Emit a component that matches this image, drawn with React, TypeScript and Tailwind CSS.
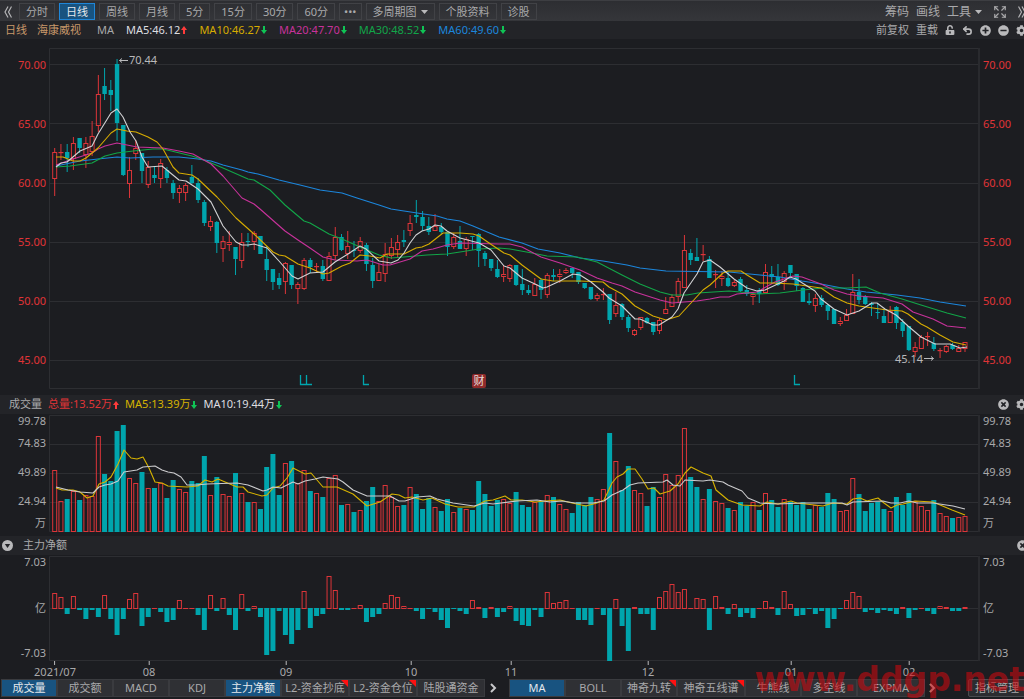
import { useState } from "react";
import { Expand, Undo2 } from "lucide-react";
import { FaCog, FaMinusCircle, FaPlusCircle, FaTimesCircle, FaUnlockAlt } from "react-icons/fa";

const RED = "#dc3539";
const CYAN = "#00a5ad";
const GRID = "#2d2e32";

const FIRST_X = 54.7;
const STEP = 6.235;
const PLOT_LEFT = 49;
const PLOT_WIDTH = 931;

const dayX = (i: number) => FIRST_X + i * STEP;
const percent = (x: number) => `${((x - PLOT_LEFT) / PLOT_WIDTH) * 100}%`;

// high, body top, body bottom, low in plot units
const candles = [
    [148, 152, 179, 196], [144, 152, 153, 160], [144, 152, 158, 172], [137, 143, 159, 170], [138, 138, 148, 153],
    [137, 143, 155, 168], [121, 136, 152, 156], [75, 94, 126, 132], [68, 86, 94, 100], [80, 90, 95, 111],
    [59, 64, 123, 141], [125, 125, 175, 176], [157, 170, 184, 198], [140, 148, 154, 160], [153, 153, 171, 183],
    [161, 167, 185, 188], [167, 175, 178, 183], [159, 163, 179, 188], [167, 170, 178, 183], [180, 183, 193, 199],
    [185, 188, 193, 203], [183, 185, 193, 201], [165, 177, 183, 184], [178, 183, 200, 203], [200, 202, 223, 226],
    [216, 221, 227, 231], [221, 222, 243, 253], [236, 241, 249, 262], [231, 242, 245, 251], [247, 247, 259, 275],
    [233, 242, 261, 268], [233, 241, 242, 247], [231, 233, 242, 250], [236, 236, 254, 254], [246, 259, 270, 281],
    [269, 269, 282, 290], [273, 278, 285, 289], [262, 263, 282, 294], [265, 265, 285, 289], [282, 284, 289, 304],
    [258, 260, 289, 290], [258, 260, 267, 273], [263, 266, 267, 272], [260, 266, 279, 281], [252, 256, 281, 281],
    [227, 237, 256, 260], [234, 237, 250, 251], [231, 246, 254, 259], [241, 250, 251, 257], [237, 241, 251, 253],
    [243, 245, 264, 271], [258, 265, 281, 288], [264, 272, 281, 281], [243, 254, 274, 282], [238, 247, 256, 259],
    [235, 242, 250, 258], [230, 240, 242, 247], [215, 223, 231, 236], [200, 215, 217, 223], [211, 217, 226, 231],
    [217, 226, 232, 235], [214, 226, 231, 231], [223, 227, 232, 234], [232, 232, 247, 256], [233, 237, 247, 249],
    [226, 241, 249, 249], [237, 239, 249, 256], [236, 236, 237, 250], [233, 234, 251, 267], [251, 253, 259, 266],
    [259, 259, 268, 271], [260, 269, 277, 278], [265, 274, 277, 282], [264, 265, 279, 282], [265, 265, 285, 286],
    [269, 284, 290, 295], [285, 290, 293, 295], [278, 284, 296, 296], [278, 280, 290, 299], [273, 275, 295, 298],
    [269, 275, 277, 281], [269, 274, 277, 283], [268, 270, 273, 274], [268, 268, 273, 278], [272, 272, 282, 284],
    [283, 283, 288, 289], [287, 287, 299, 300], [293, 295, 299, 301], [288, 294, 295, 300], [294, 294, 320, 324],
    [292, 305, 314, 317], [303, 304, 317, 320], [315, 317, 328, 332], [329, 330, 335, 336], [317, 317, 328, 330],
    [317, 318, 323, 324], [322, 322, 332, 335], [318, 320, 331, 334], [297, 309, 314, 314], [294, 297, 307, 307],
    [278, 281, 297, 303], [235, 250, 288, 288], [249, 253, 260, 265], [238, 257, 261, 261], [245, 254, 255, 261],
    [256, 259, 278, 278], [270, 274, 275, 288], [271, 276, 279, 286], [272, 278, 286, 287], [280, 282, 286, 287],
    [277, 279, 291, 292], [285, 290, 294, 296], [292, 294, 297, 305], [288, 290, 294, 303], [264, 272, 293, 293],
    [266, 274, 277, 284], [264, 277, 285, 286], [271, 273, 282, 290], [265, 265, 273, 278], [274, 274, 286, 291],
    [287, 288, 302, 302], [293, 301, 303, 305], [294, 298, 306, 312], [295, 298, 305, 307], [304, 305, 311, 320],
    [309, 309, 324, 324], [317, 321, 324, 326], [309, 315, 321, 321], [274, 292, 314, 314], [279, 292, 300, 304],
    [295, 296, 304, 305], [302, 303, 305, 316], [303, 312, 313, 319], [309, 316, 323, 323], [306, 311, 323, 323],
    [306, 307, 323, 329], [319, 322, 331, 337], [326, 326, 350, 351], [342, 347, 352, 357], [335, 337, 349, 349],
    [332, 336, 337, 346], [337, 343, 349, 351], [348, 350, 351, 358], [345, 346, 352, 353], [343, 345, 349, 350],
    [345, 348, 352, 352], [342, 342, 349, 352],
];

// negative = the day closed lower
const volumes = [
    62, 31, -33, 41, -32, 37, 36, 96, -58, -51, -101, -107, 54, 49, -60, 44, -44, 49, -34, -52,
    43, 40, -51, -49, -76, 37, -55, 38, 36, -59, 39, -30, 30, -23, -65, -78, -37, 69, -71, 49,
    62, -41, 39, -35, 54, 57, -27, 28, -20, 22, -31, -45, 31, 47, 35, 26, -27, 45, -38, -23,
    -34, 25, -21, -33, 20, -24, 23, -22, -51, -38, -26, -32, 33, 29, -40, -27, -25, 30, -31, 37,
    -35, 28, 23, -19, -30, -27, -35, 33, 43, -99, 71, -42, -66, 42, 39, -26, -45, 35, 58, 47,
    57, 104, -55, -45, 33, -43, 31, 29, -24, 22, -30, -26, 30, -22, 39, -32, -25, 33, -30, -27,
    -30, -23, 27, -25, -39, -33, 21, 22, 54, -38, -21, -29, -30, -23, 21, -35, -27, -39, 31, 26,
    22, -32, 19, 16, -14, 15, 16,
];

const flows = [
    16, 12, -6, 13, -2, -11, -2, -9, 14, -11, -27, -11, 10, 16, -18, -9, 1, -4, -14, -12,
    9, 1, 1, -7, -22, 14, -3, 11, -7, -22, 15, -3, 3, -9, -47, -43, -3, -27, -36, -22,
    18, -20, -8, -6, 33, 19, -2, -2, 1, 4, -14, -9, -6, 6, 14, 12, 3, 1, -3, -11,
    -1, -4, -12, -20, -1, -3, -6, 9, 2, -10, 2, -9, -4, 3, -13, -17, -18, -2, -9, 17,
    6, 7, 9, 1, -12, -12, -17, 1, -7, -53, 10, -18, -43, 2, -6, -6, -22, 12, 18, 25,
    17, 20, 1, 11, 10, -22, 13, 2, -6, 5, -9, -5, -10, 1, 8, 2, -7, 18, 5, -8,
    -7, -1, -6, -3, -20, -11, -1, 9, 17, 13, -4, -2, -5, -2, -3, -6, 2, -10, -2, 1,
    -3, -6, 3, 2, -3, -3, 2,
];

const priceLines = [
    { color: "#1c86dc", points: "56,166 80,161 98,159 117,157 130,158 153,157 179,157 198,159 211,161 223,165 242,170 248,172 258,174 279,180 300,185 320,190 342,193 357,198 379,205 391,209 404,211 437,216 447,219 460,221 473,226 499,237 522,243 538,249 560,253 580,258 603,261 627,265 640,268 666,271 729,272 760,275 780,277 802,281 821,284 847,289 866,292 897,295 920,298 940,302 966,306" },
    { color: "#12a548", points: "56,167 70,166 92,163 105,156 117,153 133,151 153,149 163,149 192,156 204,160 223,168 248,179 254,180 270,190 285,205 304,221 310,223 329,234 342,239 360,247 379,255 391,258 404,257 427,255 447,254 460,252 479,249 499,248 510,249 532,253 547,256 577,257 597,262 622,275 640,284 660,292 672,295 687,295 698,293 729,291 740,292 757,294 780,293 803,290 823,288 847,288 866,287 880,293 902,299 921,305 947,313 966,318" },
    { color: "#c8329b", points: "56,165 73,159 92,153 98,149 105,146 117,143 127,145 137,147 163,148 179,151 193,154 211,164 223,176 242,198 254,204 260,209 285,231 298,240 310,248 323,257 335,260 357,261 367,260 383,265 390,265 410,259 422,251 433,249 447,245 460,243 499,244 510,244 522,247 541,257 560,263 580,270 597,278 612,283 622,286 635,292 660,300 672,303 684,302 697,301 710,299 720,297 729,297 737,294 757,292 775,282 793,276 802,277 821,284 834,290 847,294 859,296 883,298 902,304 913,312 933,319 947,326 966,328" },
    { color: "#d7ac00", points: "56,157 63,157 73,161 80,161 86,158 98,148 111,133 117,129 127,131 136,132 148,137 157,142 163,149 173,167 179,173 192,175 198,179 217,197 236,218 254,234 273,252 279,255 285,256 298,264 310,268 323,274 329,273 342,266 350,263 360,255 370,256 380,258 387,254 404,254 416,248 422,247 429,244 443,233 460,233 473,234 479,236 492,245 504,253 510,255 522,265 541,279 553,281 580,281 603,282 609,287 622,294 635,306 653,316 666,320 679,316 703,290 710,285 723,273 728,271 741,271 747,275 760,283 772,283 793,284 821,288 834,297 847,303 859,306 887,310 902,311 908,314 921,324 927,327 940,335 953,342 966,345" },
    { color: "#d2d2d4", points: "56,167 61,163 67,162 80,151 92,146 98,134 111,113 117,109 123,117 130,132 136,141 142,157 148,167 162,166 179,180 186,181 198,189 211,202 223,226 236,242 242,245 248,245 254,244 267,248 279,261 292,276 298,279 310,273 323,272 335,262 348,254 360,246 366,249 379,261 391,263 398,260 404,253 410,243 416,235 422,231 429,229 435,225 441,226 447,231 460,238 479,243 491,250 504,266 510,268 522,278 535,284 543,288 547,287 560,281 573,274 580,275 591,282 603,292 609,298 622,306 635,319 640,319 653,325 659,325 672,317 678,309 684,293 697,274 703,262 710,260 720,267 734,279 747,288 757,291 765,290 784,281 790,277 796,279 815,291 821,299 834,309 847,315 859,311 872,303 877,303 885,309 896,315 908,326 921,337 935,344 950,344 960,348 967,347" },
];

const volumeLines = [
    { color: "#d7b300", points: "56,488 62,490 73,490 80,492 87,498 93,496 99,484 105,482 111,477 118,464 124,450 131,458 137,459 143,457 149,468 155,482 162,483 168,486 187,487 198,486 205,480 212,482 218,479 237,487 243,487 248,492 262,496 267,495 273,488 280,486 287,478 293,468 305,474 311,473 323,487 337,487 353,494 367,506 380,502 392,494 399,495 405,498 412,497 423,500 432,498 445,504 458,507 474,507 485,501 493,500 505,496 511,500 522,500 535,502 545,501 560,500 572,503 586,506 597,503 604,500 612,483 617,477 623,474 628,469 635,469 642,479 648,489 654,488 660,494 670,491 678,484 685,473 691,467 703,473 711,476 716,490 728,500 742,505 760,506 767,502 778,504 791,501 797,503 823,506 833,503 847,504 853,499 860,498 867,501 878,498 884,503 891,508 897,505 903,504 915,501 933,502 952,510 965,515" },
    { color: "#cbcbcd", points: "56,487 68,490 80,492 93,493 99,487 105,485 111,484 118,481 124,472 137,470 143,467 155,466 162,470 168,472 174,473 181,477 187,485 197,485 207,484 237,483 248,485 263,491 267,490 273,487 281,488 293,482 298,484 305,481 315,479 323,477 338,479 343,482 353,490 367,496 390,496 399,501 405,501 417,497 430,496 437,499 453,503 474,506 485,503 493,504 517,501 537,500 550,502 562,501 575,503 593,503 604,501 612,495 623,490 630,485 638,483 663,482 667,480 673,485 680,486 685,480 703,481 710,480 723,482 728,485 742,491 748,498 760,503 778,504 803,503 842,503 847,505 853,502 883,501 891,503 900,503 909,501 917,503 933,503 953,506 965,509" },
];

const months = [
    { label: "2021/07", x: 55 },
    { label: "08", x: 149 },
    { label: "09", x: 286 },
    { label: "10", x: 411 },
    { label: "11", x: 511 },
    { label: "12", x: 648 },
    { label: "01", x: 791 },
    { label: "02", x: 909 },
];

const signals = [303, 309, 366, 797];

const periods = ["分时", "日线", "周线", "月线", "5分", "15分", "30分", "60分", "•••", "多周期图", "个股资料", "诊股"];

const leftTabs = [
    { label: "成交量" },
    { label: "成交额" },
    { label: "MACD" },
    { label: "KDJ" },
    { label: "主力净额" },
    { label: "L2-资金抄底", wide: true, hot: true },
    { label: "L2-资金仓位", wide: true, hot: true },
    { label: "陆股通资金", wide: true },
];

const rightTabs = [
    { label: "MA" },
    { label: "BOLL" },
    { label: "神奇九转", hot: true },
    { label: "神奇五线谱", wide: true, hot: true },
    { label: "牛熊线" },
    { label: "多空线" },
    { label: "EXPMA", wide: true },
];

const Arrow = ({ up }: { up?: boolean }) => (
    <svg width="6" height="8" viewBox="0 0 6 8" className="shrink-0">
        {up ? <path d="M3 0 6 4H4V8H2V4H0Z" fill="#ff3b3b" /> : <path d="M3 8 6 4H4V0H2V4H0Z" fill="#0fc455" />}
    </svg>
);

const Caret = () => (
    <svg width="7" height="4" viewBox="0 0 7 4" className="shrink-0">
        <path d="M0 0H7L3.5 4Z" fill="#b9b9bb" />
    </svg>
);

const Chevrons = ({ right }: { right?: boolean }) => (
    <svg width="8" height="12" viewBox="0 0 8 12" fill="none" stroke="#b5b5b7" strokeWidth="1.2">
        {right ? <path d="M.5 .5 3.5 6 .5 11.5M4 .5 7 6 4 11.5" /> : <path d="M4 .5 1 6 4 11.5M7.5 .5 4.5 6 7.5 11.5" />}
    </svg>
);

const More = () => (
    <svg width="7" height="10" viewBox="0 0 7 10" fill="none" stroke="#c9c9cb" strokeWidth="2">
        <path d="M1 1 5 5 1 9" />
    </svg>
);

const Reading = ({ text, up, className }: { text: string; up?: boolean; className: string }) => (
    <span className={`flex items-center gap-px ${className}`}>
        {text}
        <Arrow up={up} />
    </span>
);

const Plot = ({ top, height, grid, label, children }: { top: number; height: number; grid: number[]; label: string; children: React.ReactNode }) => (
    <svg
        role="img"
        aria-label={label}
        className="block w-full"
        height={height}
        viewBox={`${PLOT_LEFT} ${top} ${PLOT_WIDTH} ${height}`}
        preserveAspectRatio="none"
    >
        {grid.map((y) => (
            <line key={y} x1="49" x2="978" y1={y + 0.5} y2={y + 0.5} stroke={GRID} />
        ))}
        <path d={`M978 ${top + 0.5}H49.5V${top + height - 0.5}H978`} fill="none" stroke={GRID} />
        <line x1="979" x2="979" y1={top} y2={top + height} stroke="#292a2e" strokeWidth="2" />
        {children}
    </svg>
);

const Bar = ({ x, y, height, up }: { x: number; y: number; height: number; up: boolean }) =>
    up && height > 2 ? (
        <rect x={x - 2} y={y + 0.5} width="4" height={height - 1} fill="none" stroke={RED} />
    ) : (
        <rect x={x - 2.5} y={y} width="5" height={Math.max(height, 1)} fill={up ? RED : CYAN} />
    );

const Lines = ({ lines }: { lines: { color: string; points: string }[] }) => (
    <>
        {lines.map((l) => (
            <polyline key={l.color} points={l.points} fill="none" stroke={l.color} strokeWidth="1.1" strokeLinejoin="round" />
        ))}
    </>
);

const IndicatorTabs = ({ tabs, initial }: { tabs: { label: string; wide?: boolean; hot?: boolean }[]; initial: string[] }) => {
    const [active, setActive] = useState<string[]>(initial);

    const toggle = (label: string) => {
        setActive((prev) => (prev.includes(label) ? prev.filter((a) => a !== label) : [...prev, label]));
    };

    return (
        <div className="flex">
            {tabs.map((tab) => (
                <button
                    key={tab.label}
                    onClick={() => toggle(tab.label)}
                    className={`relative h-[18px] shrink-0 overflow-hidden whitespace-nowrap border border-[#3a3b3f] text-center leading-4 ${tab.wide ? "w-[68px]" : "w-14"} ${active.includes(tab.label) ? "bg-[#185380] text-[#e4e8ec]" : "bg-[#2f3034] text-[#a9a9ab]"}`}
                >
                    {tab.label}
                    {tab.hot && (
                        <svg width="7" height="7" viewBox="0 0 7 7" className="absolute right-0 top-0">
                            <path d="M0 0H7V7Z" fill="#ff1010" />
                        </svg>
                    )}
                </button>
            ))}
        </div>
    );
};

const prices = ["70.00", "65.00", "60.00", "55.00", "50.00", "45.00"];

const PriceAxis = ({ className }: { className: string }) => (
    <div className={`shrink-0 pt-[9px] leading-4 text-[#e03437] ${className}`}>
        {prices.map((p) => (
            <div key={p} className="h-[59px] last:h-4">{p}</div>
        ))}
    </div>
);

const VolumeAxis = ({ className }: { className: string }) => (
    <div className={`shrink-0 leading-3 ${className}`}>
        <div className="h-[22px]">99.78</div>
        <div className="h-[29px]">74.83</div>
        <div className="h-[29px]">49.89</div>
        <div className="h-[22px]">24.94</div>
        <div>万</div>
    </div>
);

const FlowAxis = ({ className }: { className: string }) => (
    <div className={`flex shrink-0 flex-col justify-between pb-[2px] leading-3 ${className}`}>
        <span>7.03</span>
        <span>亿</span>
        <span>-7.03</span>
    </div>
);

const App = () => {
    const [period, setPeriod] = useState("日线");

    return (
        <div className="relative overflow-hidden bg-[#1c1d21] font-['Noto_Sans','Noto_Sans_CJK_SC',sans-serif] text-[11px] text-[#a9a9ab]">
            <header className="flex h-[21px] items-center justify-between border-t border-[#3d3e42] bg-linear-to-b from-[#2d2e32] to-[#35363a] pt-px">
                <nav className="flex items-center gap-1">
                    <button aria-label="收起" className="mr-[3px] pl-1"><Chevrons /></button>
                    {periods.map((p) => (
                        <button
                            key={p}
                            onClick={() => setPeriod(p)}
                            className={`flex h-[17px] items-center gap-1 whitespace-nowrap border leading-4 ${p === "•••" ? "px-1" : "px-[6px]"} ${p === period ? "border-[#1f86d8] bg-[#185380] text-[#e4e8ec]" : "border-[#414246]"}`}
                        >
                            {p}
                            {p === "多周期图" && <Caret />}
                        </button>
                    ))}
                </nav>
                <div className="-mr-[2px] flex items-center gap-[7px] text-xs leading-4">
                    <button>筹码</button>
                    <button>画线</button>
                    <button className="flex items-center gap-1">工具<Caret /></button>
                    <button aria-label="全屏" className="ml-1"><Expand size={14} strokeWidth={2} /></button>
                    <button aria-label="展开" className="ml-1"><Chevrons right /></button>
                </div>
            </header>

            <div className="flex h-[18px] items-center justify-between bg-[#232428] pl-[5px]">
                <div className="flex items-center gap-4 whitespace-nowrap">
                    <div className="flex gap-[10px] text-[#c8986a]">
                        <span>日线</span>
                        <span>海康威视</span>
                    </div>
                    <div className="flex items-center gap-3">
                        <span>MA</span>
                        <Reading text="MA5:46.12" up className="text-[#dedee0]" />
                        <Reading text="MA10:46.27" className="text-[#d7ac00]" />
                        <Reading text="MA20:47.70" className="text-[#c8329b]" />
                        <Reading text="MA30:48.52" className="text-[#12a548]" />
                        <Reading text="MA60:49.60" className="text-[#1c86dc]" />
                    </div>
                </div>
                <div className="-mr-[3px] flex items-center gap-[7px]">
                    <button>前复权</button>
                    <button>重载</button>
                    <button aria-label="锁定"><FaUnlockAlt size={10} color="#b9b9bb" /></button>
                    <button aria-label="撤销"><Undo2 size={11} strokeWidth={3.5} color="#b9b9bb" /></button>
                    <button aria-label="放大"><FaPlusCircle size={11} color="#b9b9bb" /></button>
                    <button aria-label="缩小"><FaMinusCircle size={11} color="#b9b9bb" /></button>
                    <button aria-label="设置"><FaCog size={11} color="#b9b9bb" /></button>
                </div>
            </div>

            <section className="flex pb-[6px] pt-[9px]">
                <PriceAxis className="w-[49px] pr-[3px] text-right" />
                <div className="relative min-w-0 flex-1">
                    <Plot top={48} height={341} grid={[64, 123, 183, 242, 301, 360]} label="日K线">
                        {candles.map(([high, top, bottom, low], i) => {
                            const x = dayX(i);
                            const up = volumes[i] > 0;
                            return up ? (
                                <g key={i} stroke={RED} fill="none">
                                    <path d={`M${x} ${high}V${top}M${x} ${bottom}V${low}`} />
                                    <rect x={x - 2} y={top + 0.5} width="4" height={Math.max(bottom - top - 1, 0.2)} />
                                </g>
                            ) : (
                                <g key={i} fill={CYAN}>
                                    <rect x={x - 0.5} y={high} width="1" height={low - high} />
                                    <rect x={x - 2.2} y={top} width="4.4" height={bottom - top} />
                                </g>
                            );
                        })}
                        <Lines lines={priceLines} />
                        <path d="M128 60.5H119.5M122 58.5 119.5 60.5 122 62.5M924 358.5H933.5M931 356.5 933.5 358.5 931 360.5" stroke="#b9b9bb" fill="none" />
                        {signals.map((x) => (
                            <path key={x} d={`M${x - 2.5} 375V384.5H${x + 3}`} stroke={CYAN} strokeWidth="1.3" fill="none" />
                        ))}
                    </Plot>
                    <span className="absolute top-1 leading-4 text-[#b9b9bb]" style={{ left: percent(129) }}>70.44</span>
                    <span className="absolute top-[303px] leading-4 text-[#b9b9bb]" style={{ left: percent(895) }}>45.14</span>
                    <span className="absolute top-[326px] size-[14px] rounded-xs bg-[#8f2b2b] text-center leading-[14px] text-[#e6dcdc]" style={{ left: percent(472) }}>财</span>
                </div>
                <PriceAxis className="w-11 pl-[3px]" />
            </section>

            <div className="flex h-[19px] items-center justify-between bg-[#232428] pl-[9px]">
                <div className="flex items-center gap-[6px] whitespace-nowrap">
                    <span>成交量</span>
                    <Reading text="总量:13.52万" up className="text-[#e03437]" />
                    <Reading text="MA5:13.39万" className="text-[#d7b300]" />
                    <Reading text="MA10:19.44万" className="text-[#dedee0]" />
                </div>
                <div className="-mr-[3px] flex items-center gap-[7px]">
                    <button aria-label="关闭成交量"><FaTimesCircle size={11} color="#b9b9bb" /></button>
                    <button aria-label="设置成交量"><FaCog size={11} color="#b9b9bb" /></button>
                </div>
            </div>

            <section className="flex pb-1 pt-px">
                <VolumeAxis className="w-[49px] pr-[3px] text-right" />
                <div className="min-w-0 flex-1">
                    <Plot top={415} height={117} grid={[444, 473, 502]} label="成交量">
                        {volumes.map((v, i) => (
                            <Bar key={i} x={dayX(i)} y={532 - Math.abs(v)} height={Math.abs(v)} up={v > 0} />
                        ))}
                        <Lines lines={volumeLines} />
                    </Plot>
                </div>
                <VolumeAxis className="w-11 pl-[3px]" />
            </section>

            <div className="flex h-[19px] items-center justify-between bg-[#232428] pl-[2px]">
                <div className="flex items-center gap-[10px]">
                    <button aria-label="选择指标">
                        <svg width="11" height="11" viewBox="0 0 11 11">
                            <circle cx="5.5" cy="5.5" r="5.5" fill="#b9b9bb" />
                            <path d="M2.8 4H8.2L5.5 8Z" fill="#232428" />
                        </svg>
                    </button>
                    <span>主力净额</span>
                </div>
                <button aria-label="关闭主力净额" className="-mr-1"><FaTimesCircle size={11} color="#b9b9bb" /></button>
            </div>

            <section className="flex pt-px">
                <FlowAxis className="w-[49px] pr-[3px] text-right" />
                <div className="min-w-0 flex-1">
                    <Plot top={556} height={105} grid={[608]} label="主力净额">
                        {flows.map((v, i) => (
                            <Bar key={i} x={dayX(i)} y={v > 0 ? 609 - v : 608} height={Math.abs(v)} up={v > 0} />
                        ))}
                    </Plot>
                </div>
                <FlowAxis className="w-11 pl-[3px]" />
            </section>

            <div className="relative ml-[49px] mr-11 h-[18px]">
                {months.map((m) => (
                    <span
                        key={m.label}
                        className="absolute top-0 flex -translate-x-1/2 flex-col items-center leading-[14px] before:h-1 before:w-px before:bg-[#b9b9bb]"
                        style={{ left: percent(m.x) }}
                    >
                        {m.label}
                    </span>
                ))}
            </div>

            <footer className="flex items-center pb-[2px] pl-px">
                <IndicatorTabs tabs={leftTabs} initial={["成交量", "主力净额"]} />
                <button aria-label="更多指标" className="w-6 shrink-0 pl-[5px]">
                    <More />
                </button>
                <IndicatorTabs tabs={rightTabs} initial={["MA"]} />
                <button aria-label="更多均线" className="shrink-0 pl-1">
                    <More />
                </button>
                <button className="-mr-[2px] ml-auto h-[18px] shrink-0 whitespace-nowrap rounded-xs border border-[#4a4b4f] bg-[#2b2c30] px-[6px] leading-4">指标管理</button>
            </footer>

            <div className="pointer-events-none absolute -right-px bottom-0 whitespace-nowrap font-['DejaVu_Sans',sans-serif] text-[33px] font-bold leading-[38px] text-[#c80a10]/60">
                www.ddgp.net
            </div>
        </div>
    );
};

export default App;
